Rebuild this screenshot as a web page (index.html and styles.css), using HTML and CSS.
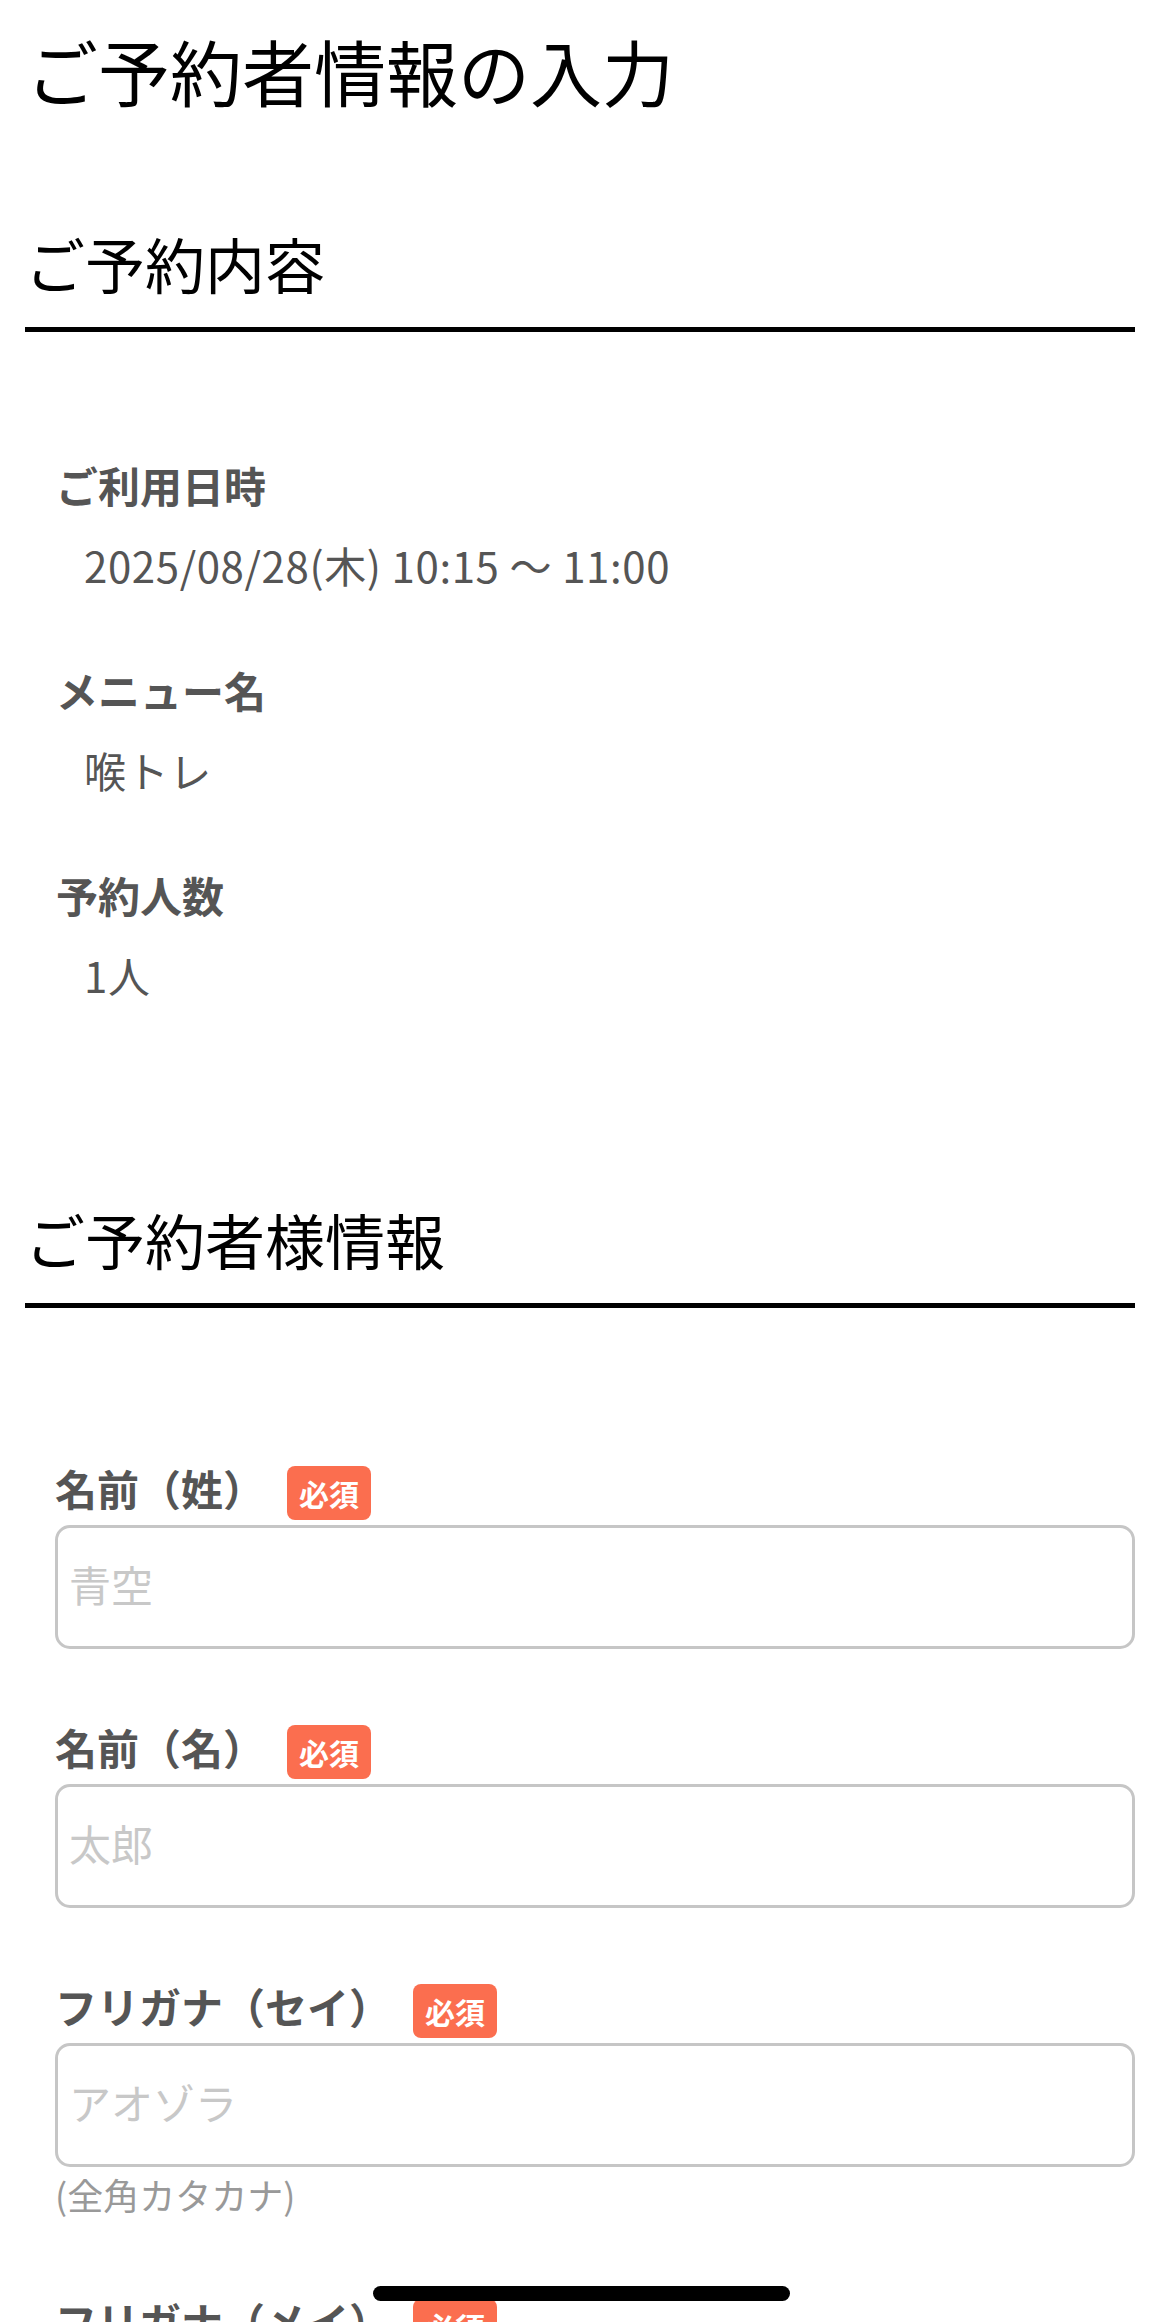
FILE: index.html
```html
<!DOCTYPE html>
<html lang="ja">

<head>
    <meta charset="UTF-8">
    <meta name="viewport" content="width=device-width, initial-scale=1.0">
    <title>ご予約者情報の入力</title>
    <link rel="stylesheet" href="styles.css">
</head>

<body>
    <div class="page">
        <h1 class="page-title">ご予約者情報の入力</h1>

        <section class="section">
            <h2 class="section-title">ご予約内容</h2>
            <dl class="summary">
                <div class="summary-item">
                    <dt>ご利用日時</dt>
                    <dd>2025/08/28(木) 10:15 〜 11:00</dd>
                </div>
                <div class="summary-item">
                    <dt>メニュー名</dt>
                    <dd>喉トレ</dd>
                </div>
                <div class="summary-item">
                    <dt>予約人数</dt>
                    <dd>1人</dd>
                </div>
            </dl>
        </section>

        <section class="section">
            <h2 class="section-title">ご予約者様情報</h2>
            <form class="form" id="reserverForm">
                <div class="form-group">
                    <div class="form-head">
                        <label for="lastName">名前（姓）</label>
                        <span class="required">必須</span>
                    </div>
                    <input type="text" id="lastName" placeholder="青空">
                </div>

                <div class="form-group">
                    <div class="form-head">
                        <label for="firstName">名前（名）</label>
                        <span class="required">必須</span>
                    </div>
                    <input type="text" id="firstName" placeholder="太郎">
                </div>

                <div class="form-group">
                    <div class="form-head">
                        <label for="lastKana">フリガナ（セイ）</label>
                        <span class="required">必須</span>
                    </div>
                    <input type="text" id="lastKana" placeholder="アオゾラ">
                    <p class="note">(全角カタカナ)</p>
                </div>

                <div class="form-group">
                    <div class="form-head">
                        <label for="firstKana">フリガナ（メイ）</label>
                        <span class="required">必須</span>
                    </div>
                    <input type="text" id="firstKana" placeholder="タロウ">
                    <p class="note">(全角カタカナ)</p>
                </div>
            </form>
        </section>
    </div>

    <div class="home-indicator"></div>
</body>

</html>
```

FILE: styles.css
```css
/* Global Styles */
body {
    font-family: "Noto Sans CJK JP", "Noto Sans", sans-serif;
    background-color: #ffffff;
    color: #000000;
    margin: 0;
}

.page {
    padding: 20px 26px 0 25px;
}

.page-title {
    margin: 0;
    padding-left: 1px;
    font-size: 72px;
    font-weight: 400;
    line-height: 100px;
}

/* Sections */
.section {
    margin-top: 98px;
}

.section-title {
    margin: 0;
    padding-bottom: 19px;
    border-bottom: 5px solid #000000;
    font-size: 60px;
    font-weight: 400;
    line-height: 90px;
}

/* Reservation Summary */
.summary {
    margin: 0;
    padding: 121px 0 90px 31px;
    color: #555555;
}

.summary-item {
    margin-bottom: 62px;
}

.summary-item:last-child {
    margin-bottom: 0;
}

.summary dt {
    margin-bottom: 17px;
    font-size: 42px;
    font-weight: 700;
    line-height: 63px;
}

.summary dd {
    margin: 0 0 0 28px;
    font-size: 42px;
    line-height: 63px;
    letter-spacing: 0.6px;
}

/* Form Styles */
.form {
    padding: 158px 0 0 30px;
}

.form-group {
    margin-bottom: 76px;
}

.form-head {
    display: flex;
    align-items: center;
    height: 54px;
    margin-bottom: 5px;
}

.form-head label {
    margin-bottom: 10px;
    font-size: 42px;
    font-weight: 700;
    color: #555555;
    line-height: 1;
}

.required {
    margin-left: 22px;
    padding: 0 12px;
    height: 54px;
    line-height: 54px;
    border-radius: 8px;
    background-color: #fb6e4f;
    color: #ffffff;
    font-size: 30px;
    font-weight: 700;
}

.form-group input {
    display: block;
    width: 100%;
    height: 124px;
    padding: 0 14px 8px 11px;
    border: 3px solid #c6c6c6;
    border-radius: 15px;
    box-sizing: border-box;
    font-family: inherit;
    font-size: 42px;
    color: #333333;
}

.form-group input::placeholder {
    color: #c8c8c8;
}

.note {
    margin: -2px 0 0;
    font-size: 36px;
    line-height: 58px;
    color: #999999;
}

/* iOS home indicator */
.home-indicator {
    position: fixed;
    left: 50%;
    bottom: 21px;
    width: 417px;
    height: 15px;
    margin-left: -208px;
    border-radius: 8px;
    background-color: #000000;
}
```
